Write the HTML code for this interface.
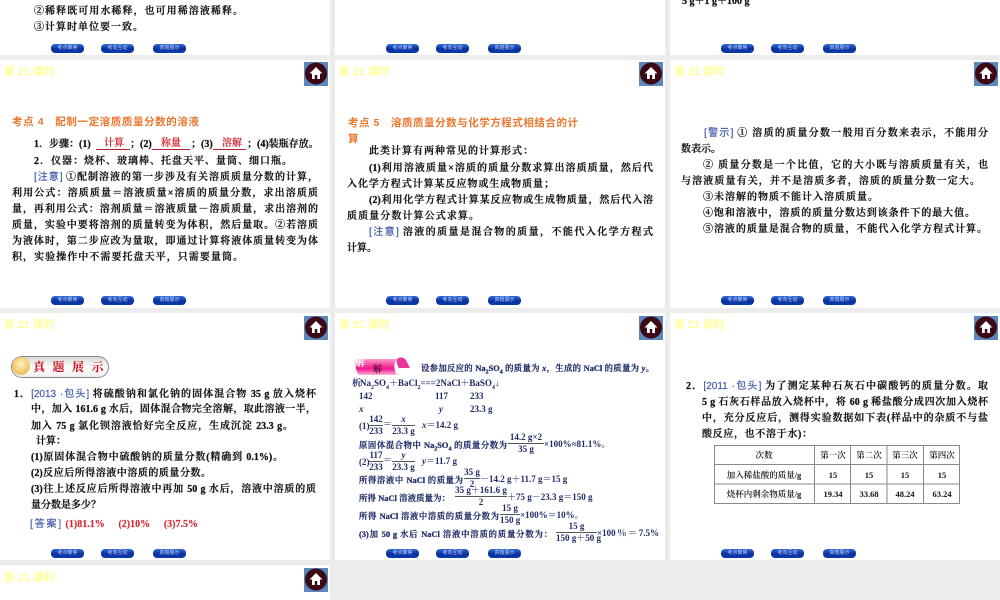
<!DOCTYPE html>
<html lang="zh">
<head>
<meta charset="utf-8">
<style>
html,body{margin:0;padding:0;width:1000px;height:600px;overflow:hidden;background:#ececec}
#w{position:absolute;left:0;top:0;width:1000px;height:600px;overflow:hidden;filter:blur(.35px)}
.s{position:absolute;background:#fff;width:330px}
.l{position:absolute;height:14px;margin-top:4px;font:600 10px/14px "Liberation Serif","Noto Serif CJK SC",serif;color:#111;text-align:justify;text-align-last:justify;overflow:hidden;-webkit-text-stroke:.25px #111}
.l b{font-weight:700}
.w{white-space:nowrap;text-align:left;text-align-last:left}
.f{position:absolute;white-space:nowrap;font:700 9px/11px "Liberation Serif","Noto Serif CJK SC",serif;color:#1f2a66;text-align:center}
.l.n{color:#1f2a66;font-size:8.4px;-webkit-text-stroke:.25px #1f2a66}
.t{position:absolute;font:700 10.8px/16px "Liberation Sans","Noto Sans CJK SC",sans-serif;color:#ffff99;white-space:nowrap}
.h{position:absolute;margin-top:1px;font:700 10.5px/14px "Liberation Sans","Noto Sans CJK SC",sans-serif;color:#e9772e;text-align-last:justify;height:14px;overflow:hidden}
.u{color:#3d55a8;font-family:"Liberation Sans","Noto Sans CJK SC",sans-serif;font-weight:400;-webkit-text-stroke:.15px #3d55a8}
.l.r,.r{color:#d62a35;-webkit-text-stroke:.15px #d62a35}
.b{position:absolute;width:33px;height:9px;border-radius:4px;background:linear-gradient(#2f6cd8,#0b2f9c 55%,#0a3db0);color:#bcd2ff;font:400 5px/9px "Liberation Sans","Noto Sans CJK SC",sans-serif;text-align:center;white-space:nowrap;overflow:hidden}
.o{position:absolute;height:1px;background:#b02030}
.k{position:absolute;height:1px;background:#555}
svg{position:absolute}
</style>
</head>
<body>
<div id="w">
<!-- slides -->
<div class="s" style="left:0;top:0;height:55px"></div>
<div class="s" style="left:335px;top:0;height:55px"></div>
<div class="s" style="left:670px;top:0;height:55px"></div>
<div class="s" style="left:0;top:60px;height:248px"></div>
<div class="s" style="left:335px;top:60px;height:248px"></div>
<div class="s" style="left:670px;top:60px;height:248px"></div>
<div class="s" style="left:0;top:313px;height:247px"></div>
<div class="s" style="left:335px;top:313px;height:247px"></div>
<div class="s" style="left:670px;top:313px;height:247px"></div>
<div class="s" style="left:0;top:565px;height:35px"></div>

<!-- titles -->
<div class="t" style="left:4px;top:64px">第 21 课时</div>
<div class="t" style="left:339px;top:64px">第 21 课时</div>
<div class="t" style="left:674px;top:64px">第 21 课时</div>
<div class="t" style="left:4px;top:317px">第 21 课时</div>
<div class="t" style="left:339px;top:317px">第 21 课时</div>
<div class="t" style="left:674px;top:317px">第 21 课时</div>
<div class="t" style="left:4px;top:570px">第 21 课时</div>

<!-- home icons -->
<svg style="left:304px;top:62px" width="24" height="24" viewBox="0 0 24 24"><rect width="24" height="24" fill="#5b87bd"/><circle cx="12" cy="11.500" r="11" fill="#3c0a14"/><path d="M12 5 5.500 11.500H8V17h2.800v-4h2.400v4H16v-5.500h2.500z" fill="#fff"/></svg>
<svg style="left:639px;top:62px" width="24" height="24" viewBox="0 0 24 24"><rect width="24" height="24" fill="#5b87bd"/><circle cx="12" cy="11.500" r="11" fill="#3c0a14"/><path d="M12 5 5.500 11.500H8V17h2.800v-4h2.400v4H16v-5.500h2.500z" fill="#fff"/></svg>
<svg style="left:974px;top:62px" width="24" height="24" viewBox="0 0 24 24"><rect width="24" height="24" fill="#5b87bd"/><circle cx="12" cy="11.500" r="11" fill="#3c0a14"/><path d="M12 5 5.500 11.500H8V17h2.800v-4h2.400v4H16v-5.500h2.500z" fill="#fff"/></svg>
<svg style="left:304px;top:316px" width="24" height="24" viewBox="0 0 24 24"><rect width="24" height="24" fill="#5b87bd"/><circle cx="12" cy="11.500" r="11" fill="#3c0a14"/><path d="M12 5 5.500 11.500H8V17h2.800v-4h2.400v4H16v-5.500h2.500z" fill="#fff"/></svg>
<svg style="left:639px;top:316px" width="24" height="24" viewBox="0 0 24 24"><rect width="24" height="24" fill="#5b87bd"/><circle cx="12" cy="11.500" r="11" fill="#3c0a14"/><path d="M12 5 5.500 11.500H8V17h2.800v-4h2.400v4H16v-5.500h2.500z" fill="#fff"/></svg>
<svg style="left:974px;top:316px" width="24" height="24" viewBox="0 0 24 24"><rect width="24" height="24" fill="#5b87bd"/><circle cx="12" cy="11.500" r="11" fill="#3c0a14"/><path d="M12 5 5.500 11.500H8V17h2.800v-4h2.400v4H16v-5.500h2.500z" fill="#fff"/></svg>
<svg style="left:304px;top:568px" width="24" height="24" viewBox="0 0 24 24"><rect width="24" height="24" fill="#5b87bd"/><circle cx="12" cy="11.500" r="11" fill="#3c0a14"/><path d="M12 5 5.500 11.500H8V17h2.800v-4h2.400v4H16v-5.500h2.500z" fill="#fff"/></svg>

<!-- nav buttons row 0 -->
<div class="b" style="left:51px;top:44px">考点聚焦</div><div class="b" style="left:101px;top:44px">考向互动</div><div class="b" style="left:153px;top:44px">真题展示</div>
<div class="b" style="left:386px;top:44px">考点聚焦</div><div class="b" style="left:436px;top:44px">考向互动</div><div class="b" style="left:488px;top:44px">真题展示</div>
<div class="b" style="left:721px;top:44px">考点聚焦</div><div class="b" style="left:771px;top:44px">考向互动</div><div class="b" style="left:823px;top:44px">真题展示</div>
<!-- row 1 -->
<div class="b" style="left:51px;top:296px">考点聚焦</div><div class="b" style="left:101px;top:296px">考向互动</div><div class="b" style="left:153px;top:296px">真题展示</div>
<div class="b" style="left:386px;top:296px">考点聚焦</div><div class="b" style="left:436px;top:296px">考向互动</div><div class="b" style="left:488px;top:296px">真题展示</div>
<div class="b" style="left:721px;top:296px">考点聚焦</div><div class="b" style="left:771px;top:296px">考向互动</div><div class="b" style="left:823px;top:296px">真题展示</div>
<!-- row 2 -->
<div class="b" style="left:51px;top:549px">考点聚焦</div><div class="b" style="left:101px;top:549px">考向互动</div><div class="b" style="left:153px;top:549px">真题展示</div>
<div class="b" style="left:386px;top:549px">考点聚焦</div><div class="b" style="left:436px;top:549px">考向互动</div><div class="b" style="left:488px;top:549px">真题展示</div>
<div class="b" style="left:721px;top:549px">考点聚焦</div><div class="b" style="left:771px;top:549px">考向互动</div><div class="b" style="left:823px;top:549px">真题展示</div>

<!-- row 0 text -->
<div class="l" style="left:34px;top:1px;width:209px">②稀释既可用水稀释，也可用稀溶液稀释。</div>
<div class="l" style="left:34px;top:17px;width:109px">③计算时单位要一致。</div>
<div class="l w" style="left:682px;top:-9px;width:80px"><b>5 g＋1 g＋100 g</b></div>

<!-- row 1 col 0 -->
<div class="h" style="left:12px;top:114px;width:187px">考点 4　配制一定溶质质量分数的溶液</div>
<div class="l w" style="left:34px;top:134px;width:62px">1．步骤：(1)</div>
<div class="l r w" style="left:104px;top:133px;width:24px">计算</div><div class="o" style="left:96px;top:149px;width:34px"></div>
<div class="l w" style="left:130px;top:134px;width:24px">；(2)</div>
<div class="l r w" style="left:161px;top:133px;width:24px">称量</div><div class="o" style="left:152px;top:149px;width:38px"></div>
<div class="l w" style="left:191px;top:134px;width:24px">；(3)</div>
<div class="l r w" style="left:222px;top:133px;width:24px">溶解</div><div class="o" style="left:213px;top:149px;width:33px"></div>
<div class="l w" style="left:247px;top:134px;width:76px">；(4)装瓶存放。</div>
<div class="l" style="left:34px;top:151px;width:258px">2．仪器：烧杯、玻璃棒、托盘天平、量筒、细口瓶。</div>
<div class="l" style="left:34px;top:167px;width:284px"><span class="u">[注意]</span> ①配制溶液的第一步涉及有关溶质质量分数的计算，</div>
<div class="l" style="left:12px;top:183px;width:306px">利用公式：溶质质量＝溶液质量×溶质的质量分数，求出溶质质</div>
<div class="l" style="left:12px;top:199px;width:306px">量，再利用公式：溶剂质量＝溶液质量－溶质质量，求出溶剂的</div>
<div class="l" style="left:12px;top:215px;width:306px">质量，实验中要将溶剂的质量转变为体积，然后量取。②若溶质</div>
<div class="l" style="left:12px;top:231px;width:306px">为液体时，第二步应改为量取，即通过计算将液体质量转变为体</div>
<div class="l" style="left:12px;top:247px;width:231px">积，实验操作中不需要托盘天平，只需要量筒。</div>

<!-- row 1 col 1 -->
<div class="h" style="left:348px;top:115px;width:230px">考点 5　溶质质量分数与化学方程式相结合的计</div>
<div class="h" style="left:348px;top:131px;width:11px">算</div>
<div class="l" style="left:369px;top:141px;width:164px">此类计算有两种常见的计算形式：</div>
<div class="l" style="left:369px;top:158px;width:284px">(1)利用溶液质量×溶质的质量分数求算出溶质质量，然后代</div>
<div class="l" style="left:347px;top:174px;width:207px">入化学方程式计算某反应物或生成物质量；</div>
<div class="l" style="left:369px;top:190px;width:284px">(2)利用化学方程式计算某反应物或生成物质量，然后代入溶</div>
<div class="l" style="left:347px;top:206px;width:132px">质质量分数计算公式求算。</div>
<div class="l" style="left:369px;top:222px;width:284px"><span class="u">[注意]</span> 溶液的质量是混合物的质量，不能代入化学方程式</div>
<div class="l w" style="left:347px;top:238px;width:34px">计算。</div>

<!-- row 1 col 2 -->
<div class="l" style="left:704px;top:123px;width:284px"><span class="u">[警示]</span> ① 溶质的质量分数一般用百分数来表示，不能用分</div>
<div class="l w" style="left:681px;top:139px;width:44px">数表示。</div>
<div class="l" style="left:703px;top:155px;width:285px">② 质量分数是一个比值，它的大小既与溶质质量有关，也</div>
<div class="l" style="left:681px;top:171px;width:299px">与溶液质量有关，并不是溶质多者，溶质的质量分数一定大。</div>
<div class="l" style="left:703px;top:187px;width:175px">③未溶解的物质不能计入溶质质量。</div>
<div class="l" style="left:703px;top:203px;width:272px">④饱和溶液中，溶质的质量分数达到该条件下的最大值。</div>
<div class="l" style="left:703px;top:219px;width:284px">⑤溶液的质量是混合物的质量，不能代入化学方程式计算。</div>

<!-- row 2 col 0 -->
<div style="position:absolute;left:11px;top:356px;width:96px;height:20px;border:1px solid #888;border-radius:11px;background:linear-gradient(#d8d8d8,#fff 55%,#f0f0f0)"></div>
<div style="position:absolute;left:12px;top:357px;width:18px;height:18px;border-radius:50%;background:radial-gradient(circle at 50% 40%,#fff2c0,#e8a830)"></div>
<div class="f" style="left:33px;top:359px;font:700 12px/15px 'Noto Serif CJK SC',serif;color:#d01020;letter-spacing:7.500px">真题展示</div>
<div class="l" style="left:14px;top:384px;width:302px"><b>1．</b><span class="u">[2013 ·包头]</span> 将硫酸钠和氯化钠的固体混合物 <b>35 g</b> 放入烧杯</div>
<div class="l" style="left:31px;top:399px;width:285px">中，加入 <b>161.6 g</b> 水后，固体混合物完全溶解，取此溶液一半，</div>
<div class="l" style="left:31px;top:416px;width:262px">加入 <b>75 g</b> 氯化钡溶液恰好完全反应，生成沉淀 <b>23.3 g</b>。</div>
<div class="l w" style="left:36px;top:431px;width:34px">计算：</div>
<div class="l" style="left:31px;top:447px;width:252px">(1)原固体混合物中硫酸钠的质量分数(精确到 <b>0.1%</b>)。</div>
<div class="l" style="left:31px;top:463px;width:180px">(2)反应后所得溶液中溶质的质量分数。</div>
<div class="l" style="left:31px;top:479px;width:285px">(3)往上述反应后所得溶液中再加 <b>50 g</b> 水后，溶液中溶质的质</div>
<div class="l w" style="left:31px;top:495px;width:76px">量分数是多少？</div>
<div class="l" style="left:30px;top:514px;width:168px"><span class="u">[答案]</span> <b class="r">(1)81.1%　(2)10%　(3)7.5%</b></div>

<!-- row 2 col 1 -->
<svg style="left:353px;top:357px" width="58" height="20" viewBox="0 0 58 20"><defs><linearGradient id="p" x1="0" y1="0" x2="0" y2="1"><stop offset="0" stop-color="#ff9ac8"/><stop offset=".6" stop-color="#f0168c"/><stop offset="1" stop-color="#ffb0d8"/></linearGradient></defs><path d="M3 2H44C40 6 41 14 44 18H6C2 13 2 7 3 2Z" fill="url(#p)"/><path d="M44 2C47-1 52 0 54 5L57 11H46C44 8 43 5 44 2Z" fill="#e8389c"/></svg>
<div class="f" style="left:373px;top:364px;color:#5a1030">解</div>
<div class="f" style="left:355px;top:358px;color:#fff;font-size:10px">解</div>
<div class="l n" style="left:421px;top:358px;width:233px">设参加反应的 <b>Na<sub style="font-size:6px;line-height:0">2</sub>SO<sub style="font-size:6px;line-height:0">4</sub></b> 的质量为 <i>x</i>，生成的 <b>NaCl</b> 的质量为 <i>y</i>。</div>
<div class="f" style="left:352px;top:378px">析</div>
<div class="f" style="left:360px;top:378px;width:138px;text-align:justify;text-align-last:justify">Na<sub style="font-size:6px;line-height:0">2</sub>SO<sub style="font-size:6px;line-height:0">4</sub>＋BaCl<sub style="font-size:6px;line-height:0">2</sub>===2NaCl＋BaSO<sub style="font-size:6px;line-height:0">4</sub>↓</div>
<div class="f" style="left:359px;top:391px">142</div><div class="f" style="left:435px;top:391px">117</div><div class="f" style="left:470px;top:391px">233</div>
<div class="f" style="left:359px;top:404px"><i>x</i></div><div class="f" style="left:439px;top:404px"><i>y</i></div><div class="f" style="left:470px;top:404px">23.3 g</div>
<div class="f" style="left:359px;top:421px">(1)</div>
<div class="f" style="left:369px;top:414px;width:14px">142</div><div class="k" style="left:369px;top:425px;width:14px"></div><div class="f" style="left:369px;top:426px;width:14px">233</div>
<div class="f" style="left:383px;top:419px">＝</div>
<div class="f" style="left:392px;top:414px;width:23px"><i>x</i></div><div class="k" style="left:392px;top:425px;width:23px"></div><div class="f" style="left:392px;top:426px;width:23px">23.3 g</div>
<div class="f" style="left:422px;top:420px"><i>x</i>＝14.2 g</div>
<div class="l n" style="left:359px;top:435px;width:148px">原固体混合物中 <b>Na<sub style="font-size:6px;line-height:0">2</sub>SO<sub style="font-size:6px;line-height:0">4</sub></b> 的质量分数为</div>
<div class="f" style="left:508px;top:432px;width:36px">14.2 g×2</div><div class="k" style="left:508px;top:443px;width:36px"></div><div class="f" style="left:508px;top:444px;width:36px">35 g</div>
<div class="f" style="left:544px;top:439px">×100%≈81.1%。</div>

<div class="f" style="left:359px;top:457px">(2)</div>
<div class="f" style="left:369px;top:450px;width:14px">117</div><div class="k" style="left:369px;top:461px;width:14px"></div><div class="f" style="left:369px;top:462px;width:14px">233</div>
<div class="f" style="left:383px;top:455px">＝</div>
<div class="f" style="left:392px;top:450px;width:23px"><i>y</i></div><div class="k" style="left:392px;top:461px;width:23px"></div><div class="f" style="left:392px;top:462px;width:23px">23.3 g</div>
<div class="f" style="left:422px;top:456px"><i>y</i>＝11.7 g</div>
<div class="l n" style="left:359px;top:470px;width:104px">所得溶液中 <b>NaCl</b> 的质量为</div>
<div class="f" style="left:464px;top:467px;width:16px">35 g</div><div class="k" style="left:464px;top:478px;width:16px"></div><div class="f" style="left:464px;top:479px;width:16px">2</div>
<div class="f" style="left:480px;top:474px">－14.2 g＋11.7 g＝15 g</div>
<div class="l n" style="left:359px;top:488px;width:91px">所得 <b>NaCl</b> 溶液质量为：</div>
<div class="f" style="left:455px;top:485px;width:52px">35 g＋161.6 g</div><div class="k" style="left:455px;top:496px;width:52px"></div><div class="f" style="left:455px;top:497px;width:52px">2</div>
<div class="f" style="left:507px;top:492px">＋75 g－23.3 g＝150 g</div>
<div class="l n" style="left:359px;top:506px;width:140px">所得 <b>NaCl</b> 溶液中溶质的质量分数为</div>
<div class="f" style="left:500px;top:503px;width:20px">15 g</div><div class="k" style="left:500px;top:514px;width:20px"></div><div class="f" style="left:500px;top:515px;width:20px">150 g</div>
<div class="f" style="left:520px;top:510px">×100%＝10%。</div>
<div class="l n" style="left:359px;top:524px;width:193px">(3)加 <b>50 g</b> 水后 <b>NaCl</b> 溶液中溶质的质量分数为：</div>
<div class="f" style="left:556px;top:521px;width:41px">15 g</div><div class="k" style="left:556px;top:532px;width:41px"></div><div class="f" style="left:556px;top:533px;width:41px">150 g＋50 g</div>
<div class="f" style="left:597px;top:528px;width:62px;text-align:justify;text-align-last:justify">×100％＝7.5%</div>

<!-- row 2 col 2 -->
<div class="l" style="left:686px;top:376px;width:302px"><b>2．</b><span class="u">[2011 ·包头]</span> 为了测定某种石灰石中碳酸钙的质量分数。取</div>
<div class="l" style="left:702px;top:392px;width:286px"><b>5 g</b> 石灰石样品放入烧杯中，将 <b>60 g</b> 稀盐酸分成四次加入烧杯</div>
<div class="l" style="left:702px;top:408px;width:286px">中，充分反应后，测得实验数据如下表(样品中的杂质不与盐</div>
<div class="l" style="left:702px;top:424px;width:110px">酸反应，也不溶于水)：</div>

<svg style="left:714px;top:445px" width="246" height="59" viewBox="0 0 246 59"><g fill="none" stroke="#8a8a8a" stroke-width="1"><rect x=".5" y=".5" width="245" height="58"/><path d="M.5 19.500H245.500M.5 39H245.500M100.500 0V59M136.500 0V59M173 0V59M209.500 0V59"/></g></svg>
<div class="f" style="left:714px;top:450px;width:100px;font-weight:600;font-size:8.500px;color:#111">次数</div>
<div class="f" style="left:815px;top:450px;width:36px;font-weight:600;font-size:8.500px;color:#111">第一次</div>
<div class="f" style="left:851px;top:450px;width:36px;font-weight:600;font-size:8.500px;color:#111">第二次</div>
<div class="f" style="left:887px;top:450px;width:36px;font-weight:600;font-size:8.500px;color:#111">第三次</div>
<div class="f" style="left:924px;top:450px;width:36px;font-weight:600;font-size:8.500px;color:#111">第四次</div>
<div class="f" style="left:714px;top:470px;width:100px;font-weight:600;font-size:8.500px;color:#111">加入稀盐酸的质量/g</div>
<div class="f" style="left:815px;top:470px;width:36px;font-size:8.500px;color:#111">15</div>
<div class="f" style="left:851px;top:470px;width:36px;font-size:8.500px;color:#111">15</div>
<div class="f" style="left:887px;top:470px;width:36px;font-size:8.500px;color:#111">15</div>
<div class="f" style="left:924px;top:470px;width:36px;font-size:8.500px;color:#111">15</div>
<div class="f" style="left:714px;top:489px;width:100px;font-weight:600;font-size:8.500px;color:#111">烧杯内剩余物质量/g</div>
<div class="f" style="left:815px;top:489px;width:36px;font-size:8.500px;color:#111">19.34</div>
<div class="f" style="left:851px;top:489px;width:36px;font-size:8.500px;color:#111">33.68</div>
<div class="f" style="left:887px;top:489px;width:36px;font-size:8.500px;color:#111">48.24</div>
<div class="f" style="left:924px;top:489px;width:36px;font-size:8.500px;color:#111">63.24</div>
</div>
</body>
</html>
